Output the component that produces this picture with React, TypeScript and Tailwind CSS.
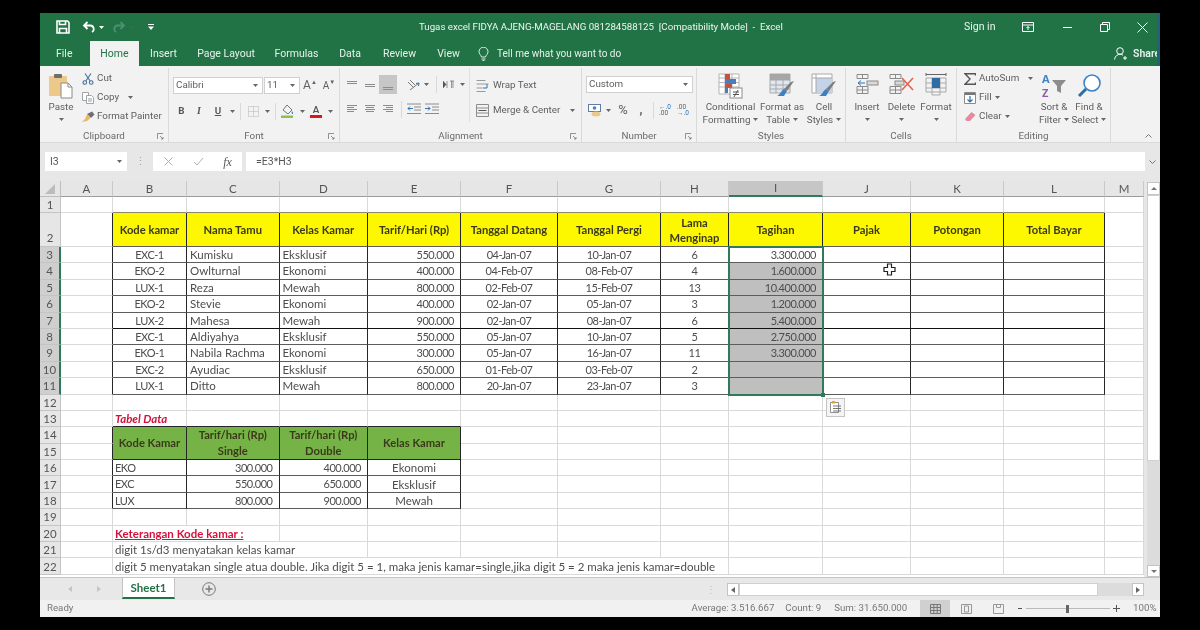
import type { ReactNode } from "react";
import { twMerge } from "tailwind-merge";

const line = "border-b-[#5c5c5c] border-r-[#262626]";
const head = "justify-center text-center font-bold text-[11.2px] text-[#3a3a1a] leading-[16px] whitespace-normal px-px";
const num = "text-[11px] tracking-[-0.5px] pt-px";
const center = "justify-center px-px";
const cols = ["A", "B", "C", "D", "E", "F", "G", "H", "I", "J", "K", "L", "M"];

const guests = [
  ["EXC-1", "Kumisku", "Eksklusif", "550.000", "04-Jan-07", "10-Jan-07", "6", "3.300.000"],
  ["EKO-2", "Owlturnal", "Ekonomi", "400.000", "04-Feb-07", "08-Feb-07", "4", "1.600.000"],
  ["LUX-1", "Reza", "Mewah", "800.000", "02-Feb-07", "15-Feb-07", "13", "10.400.000"],
  ["EKO-2", "Stevie", "Ekonomi", "400.000", "02-Jan-07", "05-Jan-07", "3", "1.200.000"],
  ["LUX-2", "Mahesa", "Mewah", "900.000", "02-Jan-07", "08-Jan-07", "6", "5.400.000"],
  ["EXC-1", "Aldiyahya", "Eksklusif", "550.000", "05-Jan-07", "10-Jan-07", "5", "2.750.000"],
  ["EKO-1", "Nabila Rachma", "Ekonomi", "300.000", "05-Jan-07", "16-Jan-07", "11", "3.300.000"],
  ["EXC-2", "Ayudiac", "Eksklusif", "650.000", "01-Feb-07", "03-Feb-07", "2", ""],
  ["LUX-1", "Ditto", "Mewah", "800.000", "20-Jan-07", "23-Jan-07", "3", ""],
];

const headers = ["Kode kamar", "Nama Tamu", "Kelas Kamar", "Tarif/Hari (Rp)", "Tanggal Datang", "Tanggal Pergi", "Lama Menginap", "Tagihan", "Pajak", "Potongan", "Total Bayar"];

const rates = [
  ["EKO", "300.000", "400.000", "Ekonomi"],
  ["EXC", "550.000", "650.000", "Eksklusif"],
  ["LUX", "800.000", "900.000", "Mewah"],
];

const Cell = ({ children, className }: { children?: ReactNode; className?: string }) => (
  <div className={twMerge("flex items-center overflow-hidden whitespace-nowrap border-r border-b border-[#d9d9d9] bg-white pl-[3px] pr-[6px] min-w-0", className)}>
    {children}
  </div>
);

const RowHead = ({ n, selected, className }: { n: number; selected?: boolean; className?: string }) => (
  <div className={twMerge("flex items-center justify-center bg-[#e6e6e6] border-r border-b border-[#c4c4c4] text-[#555]", selected && "bg-[#cfcfcf] border-r-2 border-r-[#2f7a5a]", className)}>{n}</div>
);

const Blank = ({ count, className }: { count: number; className?: string }) => (
  <>
    {Array.from({ length: count }).map((_, i) => (
      <Cell key={i} className={className} />
    ))}
  </>
);

const Caret = ({ className }: { className?: string }) => (
  <svg width="5" height="3" viewBox="0 0 5 3" className={className}>
    <path d="M0 0h5L2.5 3z" fill="#666" />
  </svg>
);

const Slot = ({ w, children }: { w: string; children?: ReactNode }) => (
  <div className={`flex items-center justify-center shrink-0 ${w}`}>{children}</div>
);

const Sep = () => <div className="w-px h-[17px] bg-[#d9d9d9]" />;

const Launcher = () => (
  <svg width="7" height="7" viewBox="0 0 7 7" className="absolute right-[4px] top-[4px]">
    <path d="M.5 6V.5H6M3 3l3 3M6 4v2H4" fill="none" stroke="#777" strokeWidth=".8" />
  </svg>
);

const Group = ({ w, label, launcher, children }: { w: string; label: string; launcher?: boolean; children: ReactNode }) => (
  <div className={`flex flex-col shrink-0 border-r border-[#dadada] ${w}`}>
    <div className="flex h-[61px]">{children}</div>
    <div className="relative h-[13px] text-center leading-[13px] text-[#6b6b6b]">
      {label}
      {launcher && <Launcher />}
    </div>
  </div>
);

const BigButton = ({ w, icon, lines, caretBelow }: { w: string; icon: ReactNode; lines: ReactNode[]; caretBelow?: boolean }) => (
  <div className={`flex flex-col items-center pt-[5px] shrink-0 ${w}`}>
    <div className="flex h-[26px] items-start justify-center">{icon}</div>
    <div className="mt-px text-center leading-[13px] whitespace-nowrap">
      {lines.map((l, i) => (
        <div key={i} className="flex items-center justify-center gap-[3px] h-[13px]">{l}</div>
      ))}
    </div>
    {caretBelow && <Caret className="mt-[5px]" />}
  </div>
);

const Combo = ({ w, text }: { w: string; text: string }) => (
  <div className={`flex items-center justify-between h-[17px] bg-white border border-[#d0d0d0] pl-[2px] pr-[4px] shrink-0 ${w}`}>
    <span>{text}</span>
    <Caret />
  </div>
);

const Lines = ({ rows }: { rows: [number, number, number][] }) => (
  <svg width="12" height="12" viewBox="0 0 12 12">
    {rows.map(([y, x, w], i) => (
      <rect key={i} x={x} y={y} width={w} height="1" fill="#8c8c8c" />
    ))}
  </svg>
);

const PasteIcon = () => (
  <svg width="26" height="26" viewBox="0 0 26 26">
    <rect x="1" y="3" width="18" height="20" rx="1" fill="#ecc98a" />
    <rect x="6" y="1" width="8" height="4" rx="1" fill="#6e6e6e" />
    <path d="M13 10h7l4 4v11H13z" fill="#fff" stroke="#8a8a8a" />
    <path d="M20 10v4h4" fill="none" stroke="#8a8a8a" />
  </svg>
);

const CutIcon = () => (
  <svg width="12" height="12" viewBox="0 0 12 12" fill="none" stroke="#44709f" strokeWidth="1.1">
    <circle cx="2.8" cy="9.5" r="1.8" />
    <circle cx="9.2" cy="9.5" r="1.8" />
    <path d="M3.8 8 9 .5M8.2 8 3 .5" />
  </svg>
);

const CopyIcon = () => (
  <svg width="12" height="12" viewBox="0 0 12 12" fill="#fff" stroke="#9a9a9a" strokeWidth=".9">
    <path d="M.5.5h6v8h-6z" />
    <path d="M4.5 3.5h5l2 2v6h-7z" />
    <path d="M6 7h4M6 9h4" stroke="#79a" />
  </svg>
);

const PainterIcon = () => (
  <svg width="13" height="12" viewBox="0 0 13 12">
    <path d="M5 3l5-2.500 2.500 3L9 7z" fill="#6f6f6f" />
    <path d="M5 3.500 8.500 7 5 10 0 11 3 8z" fill="#e9b75f" />
  </svg>
);

const SaveIcon = () => (
  <svg width="14" height="14" viewBox="0 0 14 14" fill="none" stroke="#fff" strokeWidth="1.600">
    <path d="M1 1h10.500L13 2.500V13H1z" />
    <path d="M3.500 1v3.500h6V1M3.500 13V8.500h7V13" />
  </svg>
);

const UndoIcon = ({ color, className }: { color: string; className?: string }) => (
  <svg width="13" height="12" viewBox="0 0 13 12" fill="none" stroke={color} strokeWidth="1.800" className={className}>
    <path d="M5.500 1 2 4.500 5.500 8M2 4.500h6a3.500 3.500 0 0 1 2 6.500" />
  </svg>
);

const CondIcon = () => (
  <svg width="25" height="26" viewBox="0 0 25 26">
    <path d="M1 1h20v20H1zM1 5h20M1 9.500h20M1 14h20M7 1v20M14 1v20" fill="#fff" stroke="#b5b5b5" />
    <rect x="7" y="1" width="5" height="5" fill="#c7503f" />
    <rect x="7" y="6" width="11" height="5" fill="#4a7ebb" />
    <rect x="7" y="11" width="7" height="4" fill="#c7503f" />
    <rect x="7" y="15" width="3" height="5" fill="#4a7ebb" />
    <rect x="12" y="15" width="12" height="10" fill="#fff" stroke="#8c8c8c" />
    <path d="M15 19h6M15 21.500h6M20 17l-4 7" stroke="#555" fill="none" />
  </svg>
);

const BrushTail = () => (
  <>
    <path d="M22 9l3-1-7 10-3-2z" fill="#7d7d7d" />
    <path d="M15 16l3 2-3 5H8c3-1 4-5 7-7z" fill="#3f7fc0" />
  </>
);

const TableIcon = () => (
  <svg width="26" height="26" viewBox="0 0 26 26">
    <path d="M1 1h20v19H1zM1 7h20M1 12h20M1 16h20M7 1v19M14 1v19" fill="#dfe7f2" stroke="#a9a9a9" />
    <rect x="1" y="1" width="20" height="6" fill="#a6a6a6" />
    <BrushTail />
  </svg>
);

const CellStyleIcon = () => (
  <svg width="26" height="26" viewBox="0 0 26 26">
    <path d="M1 1h20v19H1z" fill="#fff" stroke="#a9a9a9" />
    <rect x="5" y="5" width="16" height="15" fill="#c5d3e8" />
    <path d="M1 5h20M5 1v19" stroke="#a9a9a9" fill="none" />
    <BrushTail />
  </svg>
);

const InsertIcon = () => (
  <svg width="23" height="22" viewBox="0 0 23 22" fill="none" stroke="#8a8a8a">
    <path d="M1 1.500h11v4H1zM6.500 1.500v4M1 13.500h11v7H1zM1 17h11M6.500 13.500v7" />
    <rect x="11" y="8" width="11" height="4" fill="#d9d9d9" />
    <path d="M9 10H2M5 7.500 2 10l3 2.500" stroke="#2e75b6" />
  </svg>
);

const DeleteIcon = () => (
  <svg width="26" height="22" viewBox="0 0 26 22" fill="none" stroke="#8a8a8a">
    <path d="M1 1.500h11v4H1zM6.500 1.500v4M1 13.500h11v7H1zM1 17h11M6.500 13.500v7" />
    <rect x="6" y="8" width="9" height="4" fill="#d9d9d9" />
    <path d="M13 5l11 12M24 5 13 17" stroke="#e0604c" strokeWidth="1.500" />
  </svg>
);

const FormatIcon = () => (
  <svg width="24" height="24" viewBox="0 0 24 24" fill="none" stroke="#a9a9a9">
    <path d="M2 5h20v14H2zM2 10h20M2 15h20M8 5v14M16 5v14" />
    <rect x="8" y="5" width="8" height="10" fill="#2e6da4" stroke="none" />
    <path d="M2 1.500h20M2 0v3M22 0v3" stroke="#666" />
    <path d="M8 19v3h8v-3" />
  </svg>
);

const SortIcon = () => (
  <div className="relative w-[24px] h-[25px] font-['Open_Sans',sans-serif] font-bold text-[11px] leading-[11px]">
    <span className="absolute left-0 top-0 text-[#3f83c5]">A</span>
    <span className="absolute left-0 top-[14px] text-[#8e5ca8]">Z</span>
    <svg width="14" height="14" viewBox="0 0 14 14" className="absolute left-[10px] top-[6px]">
      <path d="M0 1h14L9 7v7L5 12V7z" fill="#8c8c8c" />
    </svg>
  </div>
);

const FindIcon = () => (
  <svg width="25" height="25" viewBox="0 0 25 25" fill="none">
    <circle cx="15" cy="10" r="8" stroke="#3f83c5" strokeWidth="1.600" fill="#fff" />
    <path d="M9 16 2 23" stroke="#2e6da4" strokeWidth="3" />
  </svg>
);

const Bulb = () => (
  <svg width="11" height="14" viewBox="0 0 11 14" fill="none" stroke="#dfeee6" strokeWidth="1">
    <path d="M3.500 10C3 8 1 7 1 4.700a4.500 4.500 0 0 1 9 0C10 7 8 8 7.500 10zM3.500 12h4M4.500 13.500h2" />
  </svg>
);

const TitleBar = () => (
  <div className="flex h-[28px] items-center bg-[#217346] text-[#eef5f0] shrink-0">
    <div className="flex items-center w-[379px] shrink-0">
      <div className="ml-[16px]"><SaveIcon /></div>
      <div className="ml-[12px]"><UndoIcon color="#fff" /></div>
      <Caret className="ml-[4px] brightness-[4]" />
      <div className="ml-[9px]"><UndoIcon color="#4d9070" className="-scale-x-100" /></div>
      <Caret className="ml-[4px] opacity-30" />
      <svg width="6" height="6" viewBox="0 0 6 6" className="ml-[13px]"><path d="M0 0h6v1H0zM0 2.500h6L3 6z" fill="#fff" /></svg>
    </div>
    <div className="w-[545px] shrink-0 text-[9.7px] whitespace-pre">Tugas excel FIDYA AJENG-MAGELANG 081284588125  [Compatibility Mode]  -  Excel</div>
    <div className="w-[50px] shrink-0 text-[10.5px]">Sign in</div>
    <Slot w="w-[28px]">
      <svg width="12" height="10" viewBox="0 0 12 10" fill="none" stroke="#fff"><path d="M.5.5h11v9H.5zM.5 3h11" /><path d="M6 8V4.500M4.500 6 6 4.500 7.500 6" /></svg>
    </Slot>
    <Slot w="w-[38px] ml-[6px]"><div className="w-[9px] h-px bg-white" /></Slot>
    <Slot w="w-[38px]">
      <svg width="10" height="10" viewBox="0 0 10 10" fill="none" stroke="#fff"><path d="M.5 2.500h7v7h-7zM2.500 2.500v-2h7v7h-2" /></svg>
    </Slot>
    <Slot w="w-[36px]">
      <svg width="11" height="11" viewBox="0 0 11 11" stroke="#fff"><path d="M.5.5l10 10M10.500.5l-10 10" /></svg>
    </Slot>
  </div>
);

const TabBar = () => (
  <div className="flex h-[25px] items-stretch bg-[#217346] text-[#e7f1ec] text-[10.5px] shrink-0">
    <div className="w-[50px] pl-[16px] flex items-center">File</div>
    <Slot w="w-[49px] bg-[#f2f2f2] text-[#217346]">Home</Slot>
    <Slot w="w-[49px]">Insert</Slot>
    <Slot w="w-[76px]">Page Layout</Slot>
    <Slot w="w-[65px]">Formulas</Slot>
    <Slot w="w-[42px]">Data</Slot>
    <Slot w="w-[57px]">Review</Slot>
    <Slot w="w-[41px]">View</Slot>
    <Slot w="w-[28px]"><Bulb /></Slot>
    <div className="flex items-center text-[10px]">Tell me what you want to do</div>
    <div className="flex items-center gap-[6px] ml-auto w-[46px] shrink-0 overflow-hidden whitespace-nowrap">
      <svg width="13" height="13" viewBox="0 0 13 13" fill="none" stroke="#fff" className="shrink-0"><circle cx="6" cy="4" r="3.300" /><path d="M.5 12.500C1 9 3.500 7.300 6 7.300c1 0 2 .3 3 .9M9 11h4M11 9v4" /></svg>
      <span className="font-semibold">Share</span>
    </div>
  </div>
);

const Clipboard = () => (
  <Group w="w-[129px]" label="Clipboard" launcher>
    <div className="flex flex-col items-center w-[26px] ml-[8px] pt-[5px]">
      <PasteIcon />
      <div className="mt-px leading-[13px]">Paste</div>
      <Caret className="mt-[5px]" />
    </div>
    <div className="flex flex-col ml-[8px] pt-px">
      <div className="flex items-center gap-[3px] h-[19px]"><CutIcon />Cut</div>
      <div className="flex items-center gap-[3px] h-[19px]"><CopyIcon />Copy<Caret className="ml-[6px]" /></div>
      <div className="flex items-center gap-[2px] h-[19px] whitespace-nowrap"><PainterIcon />Format Painter</div>
    </div>
  </Group>
);

const FontGroup = () => (
  <Group w="w-[171px]" label="Font" launcher>
    <div className="flex flex-col pl-[4px] pt-[8px]">
      <div className="flex items-center gap-px">
        <Combo w="w-[90px]" text="Calibri" />
        <Combo w="w-[36px]" text="11" />
        <Slot w="w-[18px] text-[12px]">A<sup className="text-[6px]">▲</sup></Slot>
        <Slot w="w-[18px] text-[10px]">A<sup className="text-[6px]">▼</sup></Slot>
      </div>
      <div className="flex items-center h-[18px] mt-[8px] text-[#555]">
        <Slot w="w-[17px] font-bold">B</Slot>
        <Slot w="w-[18px] italic font-['Liberation_Serif',serif] font-bold">I</Slot>
        <Slot w="w-[20px] underline font-semibold">U</Slot>
        <Slot w="w-[8px]"><Caret /></Slot>
        <Slot w="w-[8px]"><Sep /></Slot>
        <Slot w="w-[18px]">
          <svg width="11" height="11" viewBox="0 0 11 11" fill="none" stroke="#b5b5b5" strokeDasharray="1 1"><path d="M.5.5h10v10H.5zM5.500.5v10M.5 5.500h10" /></svg>
        </Slot>
        <Slot w="w-[10px]"><Caret /></Slot>
        <Slot w="w-[6px]"><Sep /></Slot>
        <Slot w="w-[20px]">
          <svg width="14" height="14" viewBox="0 0 14 14"><path d="M6 1l5 5-4 4-5-4z" fill="#f4f4f4" stroke="#777" /><path d="M11 7c1 1.500 1.500 2 1 3-1 .5-2-1-1-3z" fill="#3f83c5" /><rect x="0" y="11.500" width="12" height="2.500" fill="#8cc152" /></svg>
        </Slot>
        <Slot w="w-[8px]"><Caret /></Slot>
        <Slot w="w-[20px]">
          <div className="flex flex-col items-center leading-[10px] font-semibold">A<div className="w-[12px] h-[3px] bg-[#d9161c]" /></div>
        </Slot>
        <Slot w="w-[8px]"><Caret /></Slot>
      </div>
    </div>
  </Group>
);

const Alignment = () => (
  <Group w="w-[242px]" label="Alignment" launcher>
    <div className="flex flex-col w-[130px] pl-[3px] pt-[7px] border-r border-[#e0e0e0] h-[54px] shrink-0">
      <div className="flex items-center h-[19px]">
        <Slot w="w-[18px]"><Lines rows={[[2, 1, 10], [4, 1, 10]]} /></Slot>
        <Slot w="w-[18px]"><Lines rows={[[5, 1, 10], [7, 1, 10]]} /></Slot>
        <Slot w="w-[18px] h-[19px] bg-[#c6c6c6]"><Lines rows={[[8, 1, 10], [10, 1, 10]]} /></Slot>
        <Slot w="w-[7px]" />
        <Slot w="w-[18px]">
          <svg width="13" height="12" viewBox="0 0 13 12" fill="none" stroke="#777"><path d="M1 3l5 5M3 1l5 5M3 11l9-7" /><path d="M12 4 9 4.500M12 4l-.5 3" stroke="#2e75b6" /></svg>
        </Slot>
        <Slot w="w-[8px]"><Caret /></Slot>
        <Slot w="w-[12px]"><Sep /></Slot>
        <Slot w="w-[12px]">
          <svg width="11" height="9" viewBox="0 0 11 9"><path d="M0 1l3 3.500L0 8zM4 1v7M7 1h4M8.500 1v7M10 1v7" fill="#555" stroke="#555" strokeWidth=".6" /></svg>
        </Slot>
        <Slot w="w-[16px]"><Caret /></Slot>
      </div>
      <div className="flex items-center h-[18px] mt-[6px]">
        <Slot w="w-[18px]"><Lines rows={[[2, 1, 10], [4, 1, 7], [6, 1, 10], [8, 1, 7]]} /></Slot>
        <Slot w="w-[18px]"><Lines rows={[[2, 1, 10], [4, 2, 8], [6, 1, 10], [8, 2, 8]]} /></Slot>
        <Slot w="w-[18px]"><Lines rows={[[2, 1, 10], [4, 4, 7], [6, 1, 10], [8, 4, 7]]} /></Slot>
        <Slot w="w-[8px]"><Sep /></Slot>
        <Slot w="w-[18px]">
          <svg width="14" height="12" viewBox="0 0 14 12" fill="none"><path d="M0 1h14M7 4h7M7 7h7M0 10.500h14" stroke="#8c8c8c" /><path d="M6 5.500H1M3 3.500l-2 2 2 2" stroke="#2e75b6" /></svg>
        </Slot>
        <Slot w="w-[18px]">
          <svg width="14" height="12" viewBox="0 0 14 12" fill="none"><path d="M0 1h14M7 4h7M7 7h7M0 10.500h14" stroke="#8c8c8c" /><path d="M0 5.500h5M3 3.500l2 2-2 2" stroke="#2e75b6" /></svg>
        </Slot>
      </div>
    </div>
    <div className="flex flex-col pl-[6px] pt-[8px]">
      <div className="flex items-center gap-[4px] h-[19px]">
        <svg width="13" height="12" viewBox="0 0 13 12" fill="none" stroke="#9a9a9a"><path d="M.5.5h9M.5 4h12M.5 8h6M.5 11.500h9" /><path d="M7 8h4v-4" stroke="#2e75b6" /></svg>
        Wrap Text
      </div>
      <div className="flex items-center gap-[4px] h-[18px] mt-[6px] whitespace-nowrap">
        <svg width="13" height="13" viewBox="0 0 13 13" fill="none" stroke="#8c8c8c"><path d="M.5.5h12v12H.5zM.5 4h12M.5 9h12" /><path d="M2.500 6.500h8" stroke="#555" /></svg>
        Merge &amp; Center
        <Caret className="ml-[6px]" />
      </div>
    </div>
  </Group>
);

const NumberGroup = () => (
  <Group w="w-[115px]" label="Number" launcher>
    <div className="flex flex-col pl-[4px] pt-[8px]">
      <Combo w="w-[107px]" text="Custom" />
      <div className="flex items-center h-[18px] mt-[8px]">
        <Slot w="w-[18px]">
          <svg width="14" height="13" viewBox="0 0 14 13"><rect x=".5" y=".5" width="12" height="7" fill="#fff" stroke="#5b7fa8" /><circle cx="6.500" cy="4" r="1.800" fill="#5b7fa8" /><ellipse cx="8" cy="10" rx="4.500" ry="2.500" fill="#ecc98a" /></svg>
        </Slot>
        <Slot w="w-[8px]"><Caret /></Slot>
        <Slot w="w-[22px] text-[13px]">%</Slot>
        <Slot w="w-[14px] font-bold text-[12px] leading-[10px]">,</Slot>
        <Slot w="w-[10px]"><Sep /></Slot>
        <Slot w="w-[14px]">
          <div className="flex flex-col text-[6.500px] leading-[6px]"><span className="text-[#2e75b6]">←.0</span><span>.00</span></div>
        </Slot>
        <Slot w="w-[22px]">
          <div className="flex flex-col text-[6.500px] leading-[6px]"><span>.00</span><span className="text-[#2e75b6]">→.0</span></div>
        </Slot>
      </div>
    </div>
  </Group>
);

const Styles = () => (
  <Group w="w-[149px]" label="Styles">
    <div className="w-[6px] shrink-0" />
    <BigButton w="w-[55px]" icon={<CondIcon />} lines={["Conditional", <>Formatting<Caret /></>]} />
    <BigButton w="w-[48px]" icon={<TableIcon />} lines={["Format as", <>Table<Caret /></>]} />
    <BigButton w="w-[36px]" icon={<CellStyleIcon />} lines={["Cell", <>Styles<Caret /></>]} />
  </Group>
);

const Cells = () => (
  <Group w="w-[111px]" label="Cells">
    <div className="w-[6px] shrink-0" />
    <BigButton w="w-[30px]" icon={<InsertIcon />} lines={["Insert"]} caretBelow />
    <BigButton w="w-[39px]" icon={<DeleteIcon />} lines={["Delete"]} caretBelow />
    <BigButton w="w-[30px]" icon={<FormatIcon />} lines={["Format"]} caretBelow />
  </Group>
);

const Editing = () => (
  <Group w="w-[154px]" label="Editing">
    <div className="flex flex-col w-[80px] pl-[7px] pt-px shrink-0">
      <div className="flex items-center gap-[3px] h-[19px]">
        <svg width="12" height="12" viewBox="0 0 12 12" fill="none" stroke="#555" strokeWidth="1.400"><path d="M11.500 2.500V.8H1l5 5.200-5 5.200h10.500V9.500" /></svg>
        AutoSum<Caret className="ml-[6px]" />
      </div>
      <div className="flex items-center gap-[3px] h-[19px]">
        <svg width="12" height="12" viewBox="0 0 12 12" fill="#fff" stroke="#8a8a8a"><path d="M.5.5h11v11H.5z" /><rect x="1" y="1" width="10" height="2" fill="#777" stroke="none" /><path d="M6 4v6M3.500 7.500 6 10l2.500-2.500" fill="none" stroke="#2e6da4" strokeWidth="1.200" /></svg>
        Fill<Caret />
      </div>
      <div className="flex items-center gap-[3px] h-[19px]">
        <svg width="12" height="12" viewBox="0 0 12 12"><path d="M7.500 1 11.500 4 6 10H2.500L1 8z" fill="#e889a0" /></svg>
        Clear<Caret />
      </div>
    </div>
    <BigButton w="w-[34px]" icon={<SortIcon />} lines={["Sort &", <>Filter<Caret /></>]} />
    <BigButton w="w-[36px]" icon={<FindIcon />} lines={["Find &", <>Select<Caret /></>]} />
  </Group>
);

const Ribbon = () => (
  <div className="flex h-[77px] pt-[2px] bg-[#f2f2f2] border-b border-[#dadada] text-[9.8px] text-[#606060] shrink-0">
    <Clipboard />
    <FontGroup />
    <Alignment />
    <NumberGroup />
    <Styles />
    <Cells />
    <Editing />
    <div className="flex flex-1 items-end justify-end pb-[4px] pr-[8px]">
      <svg width="7" height="4" viewBox="0 0 7 4" fill="none" stroke="#777"><path d="M.5 3.500l3-3 3 3" /></svg>
    </div>
  </div>
);

const FormulaBar = () => (
  <div className="flex h-[38px] items-start pt-[9px] bg-[#e7e7e7] text-[10.5px] text-[#555] shrink-0">
    <div className="flex items-center justify-between w-[82px] h-[19px] ml-[5px] pl-[5px] pr-[5px] bg-white">I3<Caret /></div>
    <Slot w="w-[26px] h-[19px] text-[#aaa]">⋮</Slot>
    <div className="flex items-center w-[89px] h-[19px] bg-white text-[#a8a8a8]">
      <Slot w="w-[30px]"><svg width="9" height="9" viewBox="0 0 9 9" stroke="#b0b0b0"><path d="M.5.5l8 8M8.500.5l-8 8" /></svg></Slot>
      <Slot w="w-[30px]"><svg width="11" height="9" viewBox="0 0 11 9" fill="none" stroke="#b0b0b0"><path d="M1 5l3 3 6-7" /></svg></Slot>
      <Slot w="w-[29px] italic font-['Liberation_Serif',serif] text-[#555] text-[12px]">fx</Slot>
    </div>
    <div className="flex items-center w-[899px] h-[19px] ml-[4px] pl-[10px] bg-white">=E3*H3</div>
    <div className="flex-1 flex justify-center h-[19px] items-center">
      <svg width="7" height="4" viewBox="0 0 7 4" fill="none" stroke="#777"><path d="M.5.5l3 3 3-3" /></svg>
    </div>
  </div>
);

const Sheet = () => (
  <div className="relative grid grid-cols-[21px_52px_74px_92.5px_88.5px_93px_97px_103px_68px_94px_88px_93px_101px_39px] grid-rows-[16px_16px_34px_repeat(20,16.4px)] w-[1104px] h-[396px] overflow-hidden bg-white font-['Lato',sans-serif] text-[11.5px] text-[#4d4d4d]">
    <div className="flex items-center justify-center bg-[#e6e6e6] border-r border-b border-[#bdbdbd]">
      <svg width="12" height="12" viewBox="0 0 12 12"><path d="M11 1v10H1z" fill="#bcbcbc" /></svg>
    </div>
    {cols.map((c) => (
      <div key={c} className={twMerge("flex items-center justify-center bg-[#e6e6e6] border-r border-b border-r-[#c8c8c8] border-b-[#9c9c9c] text-[#555]", c === "I" && "bg-[#c6c6c6] border-b-2 border-b-[#2f7a5a]")}>{c}</div>
    ))}

    <RowHead n={1} />
    <Cell />
    <Blank count={11} className="border-b-[#8a8a6a]" />
    <Cell />

    <RowHead n={2} className="items-end" />
    <Cell className="border-r-[#262626]" />
    {headers.map((h) => (
      <Cell key={h} className={twMerge("bg-[#fdf800] border-b-[#5c5c5c] border-r-[#262626]", head, h === "Lama Menginap" && "leading-[15px] px-[8px]")}>{h}</Cell>
    ))}
    <Cell />

    {guests.map((g, i) => {
      const rowLine = i === 4 ? "border-b-[#111]" : "";
      return [
        <RowHead key={`h${i}`} n={i + 3} selected />,
        <Cell key={`a${i}`} className="border-r-[#262626]" />,
        <Cell key={`b${i}`} className={twMerge(line, rowLine, center, num)}>{g[0]}</Cell>,
        <Cell key={`c${i}`} className={twMerge(line, rowLine)}>{g[1]}</Cell>,
        <Cell key={`d${i}`} className={twMerge(line, rowLine)}>{g[2]}</Cell>,
        <Cell key={`e${i}`} className={twMerge(line, rowLine, "justify-end", num)}>{g[3]}</Cell>,
        <Cell key={`f${i}`} className={twMerge(line, rowLine, center, num)}>{g[4]}</Cell>,
        <Cell key={`g${i}`} className={twMerge(line, rowLine, center, num)}>{g[5]}</Cell>,
        <Cell key={`x${i}`} className={twMerge(line, rowLine, center, num)}>{g[6]}</Cell>,
        <Cell key={`i${i}`} className={twMerge(line, rowLine, "justify-end", num, i > 0 && "bg-[#bfbfbf]")}>{g[7]}</Cell>,
        <Blank key={`r${i}`} count={3} className={twMerge(line, rowLine)} />,
        <Cell key={`m${i}`} />,
      ];
    })}

    <RowHead n={12} />
    <Blank count={13} />

    <RowHead n={13} />
    <Cell />
    <Cell className="border-b-[#262626] font-bold italic text-[#d3123c] pl-[2px] overflow-visible">Tabel Data</Cell>
    <Blank count={3} className="border-b-[#262626]" />
    <Blank count={8} />

    <RowHead n={14} />
    <Cell className="border-r-[#262626]" />
    <Cell className={twMerge("row-span-2 bg-[#76b347] border-b-[#262626] border-r-[#262626]", head)}>Kode Kamar</Cell>
    <Cell className={twMerge("bg-[#76b347] border-b-0 border-r-[#262626]", head)}>Tarif/hari (Rp)</Cell>
    <Cell className={twMerge("bg-[#76b347] border-b-0 border-r-[#262626]", head)}>Tarif/hari (Rp)</Cell>
    <Cell className={twMerge("row-span-2 bg-[#76b347] border-b-[#262626] border-r-[#262626]", head)}>Kelas Kamar</Cell>
    <Blank count={8} />

    <RowHead n={15} />
    <Cell className="border-r-[#262626]" />
    <Cell className={twMerge("bg-[#76b347] border-b-[#262626] border-r-[#262626]", head)}>Single</Cell>
    <Cell className={twMerge("bg-[#76b347] border-b-[#262626] border-r-[#262626]", head)}>Double</Cell>
    <Blank count={8} />

    {rates.map((r, i) => [
      <RowHead key={`rh${i}`} n={i + 16} />,
      <Cell key={`ra${i}`} className="border-r-[#262626]" />,
      <Cell key={`rb${i}`} className={twMerge(line, "pl-[2px]", num)}>{r[0]}</Cell>,
      <Cell key={`rc${i}`} className={twMerge(line, "justify-end", num)}>{r[1]}</Cell>,
      <Cell key={`rd${i}`} className={twMerge(line, "justify-end", num)}>{r[2]}</Cell>,
      <Cell key={`re${i}`} className={twMerge(line, center)}>{r[3]}</Cell>,
      <Blank key={`rr${i}`} count={8} />,
    ])}

    <RowHead n={19} />
    <Blank count={13} />

    <RowHead n={20} />
    <Cell />
    <Cell className="col-span-2 font-bold text-[#d3123c] underline pl-[2px]">Keterangan Kode kamar :</Cell>
    <Blank count={10} />

    <RowHead n={21} />
    <Cell />
    <Cell className="col-span-3 pl-[2px]">digit 1s/d3 menyatakan kelas kamar</Cell>
    <Blank count={9} />

    <RowHead n={22} />
    <Cell />
    <Cell className="col-span-7 pl-[2px]">digit 5 menyatakan single atua double. Jika digit 5 = 1, maka jenis kamar=single,jika digit 5 = 2 maka jenis kamar=double</Cell>
    <Blank count={5} />

    <div className="absolute -inset-px col-start-10 col-end-11 row-start-4 row-end-13 border-2 border-[#2f7a5a] pointer-events-none">
      <div className="absolute -right-[3px] -bottom-[3px] w-[4px] h-[4px] bg-[#2f7a5a]" />
    </div>

    <div className="absolute left-[786px] top-[217px] flex items-center justify-center w-[19px] h-[19px] bg-[#f4f4f4] border border-[#c4c4c4]">
      <svg width="13" height="13" viewBox="0 0 13 13" fill="#fff" stroke="#777" strokeWidth=".8"><path d="M1.500 1.500h8v10h-8z" /><path d="M3 0h3v2.500H3z" fill="#e6a23c" stroke="none" /><path d="M4 5h8M4 7.500h8M4 10h8" stroke="#555" /></svg>
    </div>

    <svg width="13" height="13" viewBox="0 0 13 13" className="absolute left-[843px] top-[82px]">
      <path d="M4.500 1h4v3.500H12v4H8.500V12h-4V8.500H1v-4h3.500z" fill="#fff" stroke="#222" strokeWidth="1.200" />
    </svg>
  </div>
);

const VScroll = () => (
  <div className="flex flex-col flex-1 pl-[3px] h-[396px] bg-[#e6e6e6]">
    <div className="flex items-center justify-center h-[13px] mt-px bg-white border border-[#c4c4c4] gap-px">
      <svg width="6" height="3" viewBox="0 0 6 3"><path d="M0 3l3-3 3 3z" fill="#777" /></svg>
    </div>
    <div className="h-[266px] bg-white border border-[#d0d0d0]" />
    <div className="flex-1 bg-[#dcdcdc]" />
    <div className="flex items-center justify-center h-[12px] bg-white border border-[#c4c4c4]">
      <svg width="6" height="3" viewBox="0 0 6 3"><path d="M0 0l3 3 3-3z" fill="#777" /></svg>
    </div>
  </div>
);

const SheetTabs = () => (
  <div className="flex h-[23px] bg-[#e8e8e8] border-t border-[#c4c4c4] text-[10px] text-[#555] shrink-0">
    <Slot w="w-[36px] ml-[12px] h-[22px]"><svg width="4" height="6" viewBox="0 0 4 6"><path d="M4 0v6L0 3z" fill="#c4c4c4" /></svg></Slot>
    <Slot w="w-[22px] h-[22px]"><svg width="4" height="6" viewBox="0 0 4 6"><path d="M0 0v6l4-3z" fill="#c4c4c4" /></svg></Slot>
    <div className="flex items-center justify-center w-[53px] h-[21px] ml-[12px] bg-white border-x border-[#c4c4c4] border-b-2 border-b-[#217346] font-['Lato',sans-serif] text-[11.5px] font-bold text-[#217346]">Sheet1</div>
    <Slot w="w-[68px] h-[22px]">
      <svg width="14" height="14" viewBox="0 0 14 14" fill="none" stroke="#777"><circle cx="7" cy="7" r="6.300" /><path d="M7 3.500v7M3.500 7h7" strokeWidth="1.400" /></svg>
    </Slot>
    <div className="flex items-center justify-end w-[484px] h-[22px] pr-[11px] text-[#bbb] shrink-0">⋮</div>
    <div className="flex items-center w-[417px] h-[13px] mt-[5px] shrink-0">
      <Slot w="w-[12px] h-[13px] bg-white border border-[#c4c4c4]"><svg width="4" height="6" viewBox="0 0 4 6"><path d="M4 0v6L0 3z" fill="#666" /></svg></Slot>
      <div className="w-[359px] h-[13px] bg-white border border-[#d0d0d0]" />
      <div className="flex-1 h-[13px] bg-[#dcdcdc]" />
      <Slot w="w-[12px] h-[13px] bg-white border border-[#c4c4c4]"><svg width="4" height="6" viewBox="0 0 4 6"><path d="M0 0v6l4-3z" fill="#666" /></svg></Slot>
    </div>
  </div>
);

const StatusBar = () => (
  <div className="flex h-[17px] items-center bg-[#f1f1f1] text-[9.7px] text-[#777] whitespace-nowrap shrink-0">
    <div className="w-[653px] pl-[7px]">Ready</div>
    <div className="w-[94px]">Average: 3.516.667</div>
    <div className="w-[49px]">Count: 9</div>
    <div className="w-[86px]">Sum: 31.650.000</div>
    <Slot w="w-[30px] h-[17px] bg-[#d0d0d0]">
      <svg width="11" height="10" viewBox="0 0 11 10" fill="none" stroke="#777"><path d="M.5.5h10v9H.5zM.5 3.500h10M.5 6.500h10M3.800.5v9M7.200.5v9" /></svg>
    </Slot>
    <Slot w="w-[32px]"><svg width="11" height="10" viewBox="0 0 11 10" fill="none" stroke="#999"><path d="M.5.5h10v9H.5zM3.500 2h4v6h-4z" /></svg></Slot>
    <Slot w="w-[32px]"><svg width="11" height="10" viewBox="0 0 11 10" fill="none" stroke="#999"><path d="M.5.5h10v9H.5zM3.500.5v3h4v-3" /></svg></Slot>
    <Slot w="w-[12px] text-[#555]"><div className="w-[4px] h-px bg-[#555]" /></Slot>
    <div className="flex items-center w-[84px] shrink-0">
      <div className="w-[40px] h-px bg-[#bbb]" />
      <div className="w-[3px] h-[8px] bg-[#666]" />
      <div className="flex-1 h-px bg-[#bbb]" />
    </div>
    <Slot w="w-[12px]">
      <svg width="7" height="7" viewBox="0 0 7 7" stroke="#555"><path d="M3.500 0v7M0 3.500h7" /></svg>
    </Slot>
    <div className="ml-[11px] w-[27px] overflow-hidden">100%</div>
  </div>
);

export default function App() {
  return (
    <div className="w-[1200px] h-[630px] bg-black pt-[13px] pl-[40px] overflow-hidden blur-[0.4px]">
      <div className="relative flex flex-col w-[1120px] h-[604px] overflow-hidden font-['Roboto',sans-serif] text-[10px]">
        <TitleBar />
        <TabBar />
        <Ribbon />
        <FormulaBar />
        <div className="flex h-[396px] bg-[#e6e6e6] shrink-0">
          <Sheet />
          <VScroll />
        </div>
        <SheetTabs />
        <StatusBar />
        <div className="absolute right-0 top-0 w-[3px] h-[53px] bg-[#23607a]" />
      </div>
    </div>
  );
}
